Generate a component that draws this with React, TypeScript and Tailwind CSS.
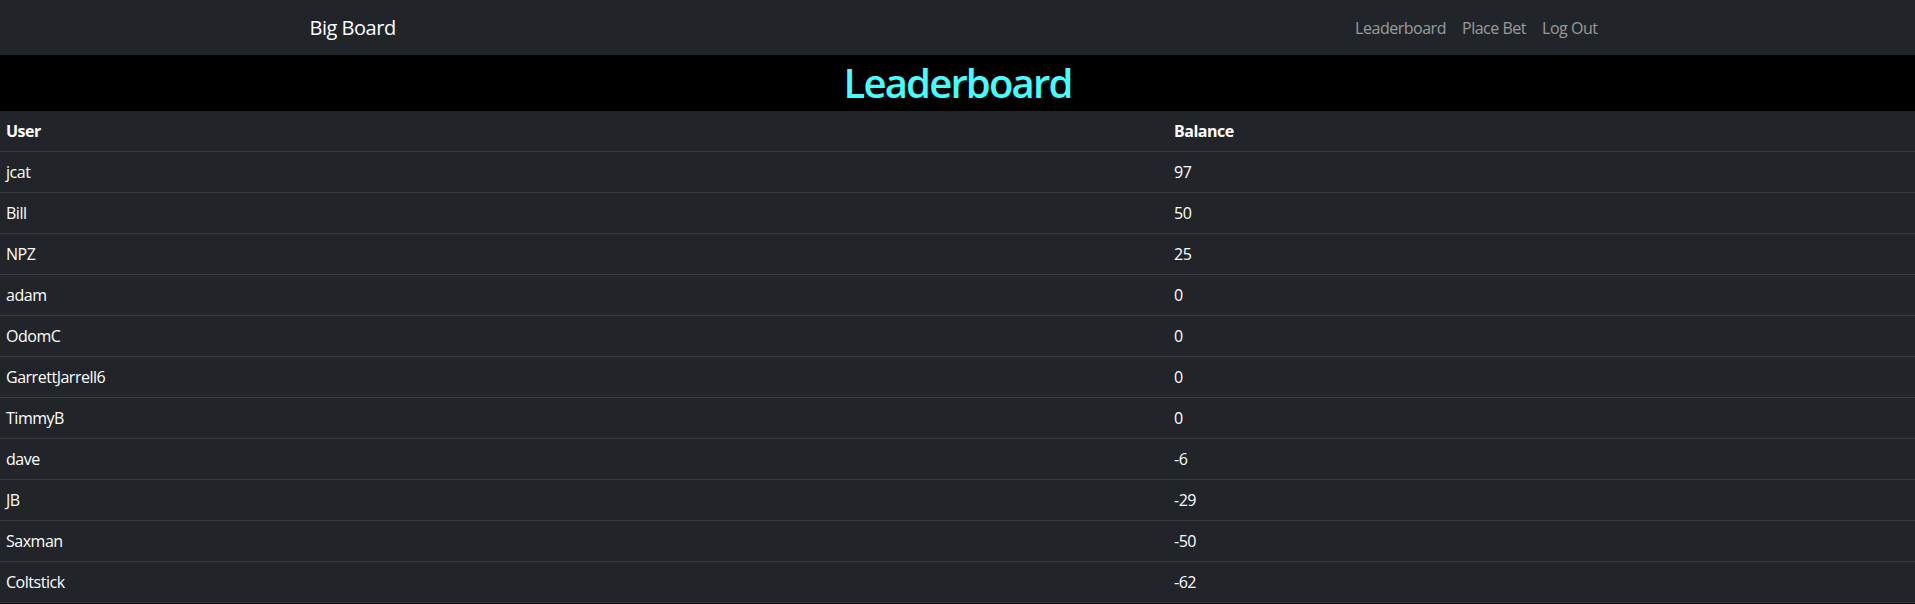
import React from "react";

const rows: [string, string][] = [
  ["jcat", "97"],
  ["Bill", "50"],
  ["NPZ", "25"],
  ["adam", "0"],
  ["OdomC", "0"],
  ["GarrettJarrell6", "0"],
  ["TimmyB", "0"],
  ["dave", "-6"],
  ["JB", "-29"],
  ["Saxman", "-50"],
  ["Coltstick", "-62"],
];

export default function App() {
  return (
    <div
      className="min-h-[604px] bg-black text-white tracking-[-0.03em]"
      style={{ fontFamily: '"Open Sans", "Noto Sans", sans-serif' }}
    >
      <nav className="h-[55px] bg-[#212529]">
        <div className="mx-auto flex h-full max-w-[1320px] items-center justify-between px-3">
          <span className="text-[20px] leading-[30px] text-white">Big Board</span>
          <div className="flex text-[16px] leading-6 text-[rgba(255,255,255,0.55)]">
            <span className="px-2">Leaderboard</span>
            <span className="px-2">Place Bet</span>
            <span className="px-2">Log Out</span>
          </div>
        </div>
      </nav>
      <div className="flex h-[56px] items-center justify-center bg-black">
        <h1 className="text-[40px] font-semibold leading-[48px] tracking-[-0.045em] text-[#44ffff]">Leaderboard</h1>
      </div>
      <table className="w-full border-collapse bg-[#212529] text-[16px] leading-6">
        <thead>
          <tr className="border-b border-[#373b3e]">
            <th className="w-[1167px] py-2 pl-[6px] pr-2 text-left font-bold">User</th>
            <th className="py-2 pl-[7px] pr-2 text-left font-bold">Balance</th>
          </tr>
        </thead>
        <tbody>
          {rows.map(([u, b]) => (
            <tr key={u} className="border-b border-[#373b3e]">
              <td className="py-2 pl-[6px] pr-2">{u}</td>
              <td className="py-2 pl-[7px] pr-2">{b}</td>
            </tr>
          ))}
        </tbody>
      </table>
    </div>
  );
}
